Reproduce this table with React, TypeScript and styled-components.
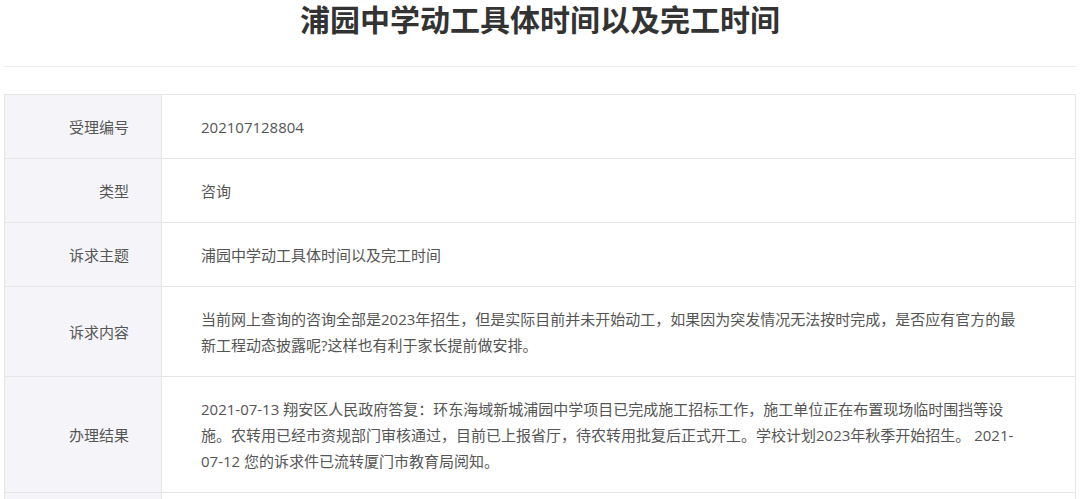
import React from "react";
import styled, { createGlobalStyle } from "styled-components";

const GlobalStyle = createGlobalStyle`
  html, body {
    margin: 0;
    padding: 0;
    background: #ffffff;
  }
  body {
    font-family: "Open Sans", "Noto Sans CJK SC", sans-serif;
    color: #555;
  }
`;

const Page = styled.div`
  width: 1080px;
  box-sizing: border-box;
  padding: 0 4px 0 4px;
`;

const Header = styled.header`
  height: 67px;
  box-sizing: border-box;
  padding-top: 3px;
  border-bottom: 1px solid #ececec;
  display: flex;
  justify-content: center;
  align-items: flex-start;
`;

const Title = styled.h1`
  margin: 0;
  font-family: "Noto Sans CJK SC", sans-serif;
  font-size: 30px;
  line-height: 30px;
  font-weight: 700;
  color: #333;
`;

const Table = styled.div`
  margin-top: 27px;
  width: 1072px;
  box-sizing: border-box;
  border: 1px solid #e6e6e6;
  border-bottom: none;
  display: grid;
  grid-template-columns: 157px 1fr;
`;

const Label = styled.div`
  background: #f5f5f9;
  border-right: 1px solid #e6e6e6;
  border-bottom: 1px solid #e6e6e6;
  display: flex;
  align-items: center;
  justify-content: flex-end;
  padding-right: 32px;
  font-size: 15px;
  line-height: 26px;
  color: #555;
  font-family: "Noto Sans CJK SC", sans-serif;
`;

const Value = styled.div`
  border-bottom: 1px solid #e6e6e6;
  padding: 19px 30px 18px 39px;
  min-height: 26px;
  font-size: 15px;
  line-height: 26px;
  color: #555;
  white-space: nowrap;
`;

type Row = { label: string; lines: string[] };

const rows: Row[] = [
  { label: "受理编号", lines: ["202107128804"] },
  { label: "类型", lines: ["咨询"] },
  { label: "诉求主题", lines: ["浦园中学动工具体时间以及完工时间"] },
  {
    label: "诉求内容",
    lines: [
      "当前网上查询的咨询全部是2023年招生，但是实际目前并未开始动工，如果因为突发情况无法按时完成，是否应有官方的最",
      "新工程动态披露呢?这样也有利于家长提前做安排。",
    ],
  },
  {
    label: "办理结果",
    lines: [
      "2021-07-13 翔安区人民政府答复：环东海域新城浦园中学项目已完成施工招标工作，施工单位正在布置现场临时围挡等设",
      "施。农转用已经市资规部门审核通过，目前已上报省厅，待农转用批复后正式开工。学校计划2023年秋季开始招生。 2021-",
      "07-12 您的诉求件已流转厦门市教育局阅知。",
    ],
  },
  { label: "", lines: [] },
];

export default function App() {
  return (
    <>
      <GlobalStyle />
      <Page>
        <Header>
          <Title>浦园中学动工具体时间以及完工时间</Title>
        </Header>
        <Table>
          {rows.map((r, idx) => (
            <React.Fragment key={idx}>
              <Label>{r.label}</Label>
              <Value>
                {r.lines.map((l, i) => (
                  <React.Fragment key={i}>
                    {i > 0 && <br />}
                    {l}
                  </React.Fragment>
                ))}
              </Value>
            </React.Fragment>
          ))}
        </Table>
      </Page>
    </>
  );
}
